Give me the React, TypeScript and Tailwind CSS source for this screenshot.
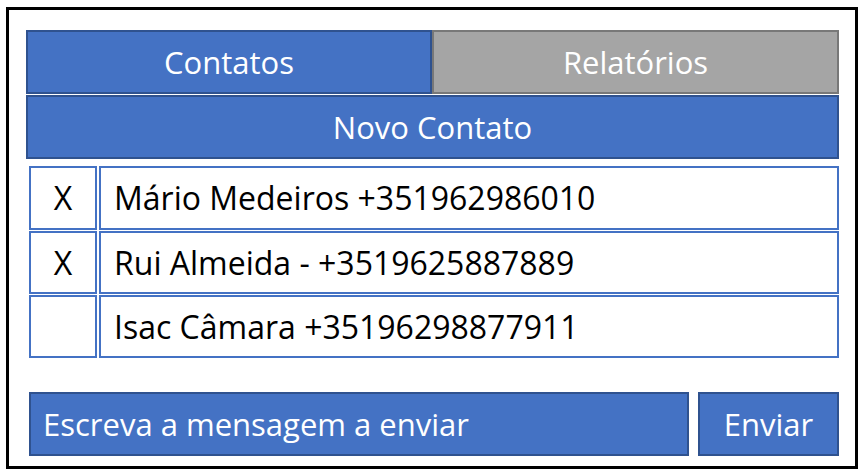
import React from 'react';

const contacts = [
    { marked: true, label: 'Mário Medeiros +351962986010' },
    { marked: true, label: 'Rui Almeida - +3519625887889' },
    { marked: false, label: 'Isac Câmara +35196298877911' },
];

const App: React.FC = () => {
    return (
        <div className="w-[862px] h-[475px] bg-white pt-[7px] pl-[6px]" style={{ fontFamily: '"Open Sans", "Noto Sans", sans-serif' }}>
            <div className="w-[852px] h-[462px] border-[3px] border-black pt-[20px] pl-[17px] pr-[16px] flex flex-col">
                {/* tabs */}
                <div className="flex h-[64px]">
                    <div className="w-[406px] bg-[#4472c4] border-2 border-[#2f528f] flex items-center justify-center text-white text-[31px]">
                        Contatos
                    </div>
                    <div className="flex-1 bg-[#a5a5a5] border-2 border-[#787878] flex items-center justify-center text-white text-[31px]">
                        Relatórios
                    </div>
                </div>
                <div className="mt-[1px] h-[64px] bg-[#4472c4] border-2 border-[#2f528f] flex items-center justify-center text-white text-[31px]">
                    Novo Contato
                </div>

                <div className="mt-[7px] ml-[3px] flex flex-col gap-[1px]">
                    {contacts.map((c, i) => (
                        <div key={i} className={`flex gap-[2px] ${i === 0 ? 'h-[64px]' : 'h-[63px]'}`}>
                            <div className="w-[68px] border-2 border-[#4472c4] flex items-center justify-center text-black text-[32px]">
                                {c.marked ? 'X' : ''}
                            </div>
                            <div className="flex-1 border-2 border-[#4472c4] flex items-center pl-[13px] text-black text-[32px]">
                                {c.label}
                            </div>
                        </div>
                    ))}
                </div>

                <div className="mt-[34px] ml-[3px] flex h-[64px] gap-[9px]">
                    <div className="w-[660px] bg-[#4472c4] border-2 border-[#2f528f] flex items-center pl-[12px] text-white text-[31px]">
                        Escreva a mensagem a enviar
                    </div>
                    <div className="flex-1 bg-[#4472c4] border-2 border-[#2f528f] flex items-center justify-center text-white text-[31px]">
                        Enviar
                    </div>
                </div>
            </div>
        </div>
    );
};

export default App;
